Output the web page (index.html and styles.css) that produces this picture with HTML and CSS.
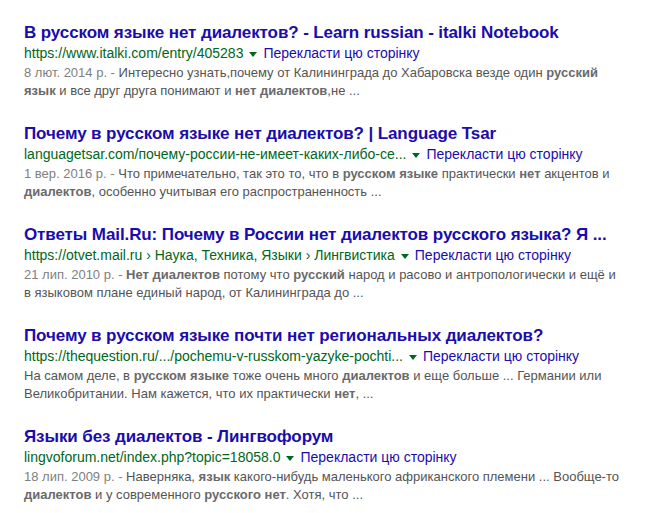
FILE: index.html
```html
<!DOCTYPE html>
<html lang="ru">
<head>
<meta charset="utf-8">
<link rel="stylesheet" href="styles.css">
</head>
<body>
<div class="results">
  <div class="g">
    <h3 class="t"><a href="#">В русском языке нет диалектов? - Learn russian - italki Notebook</a></h3>
    <div class="u"><cite>https://www.italki.com/entry/405283</cite><span class="arr"></span><a class="tr" href="#">Перекласти цю сторінку</a></div>
    <div class="s"><span class="d">8 лют. 2014 р. - </span>Интересно узнать,почему от Калининграда до Хабаровска везде один <b>русский</b><br><b>язык</b> и все друг друга понимают и <b>нет диалектов</b>,не ...</div>
  </div>
  <div class="g">
    <h3 class="t"><a href="#">Почему в русском языке нет диалектов? | Language Tsar</a></h3>
    <div class="u"><cite>languagetsar.com/почему-россии-не-имеет-каких-либо-се...</cite><span class="arr"></span><a class="tr" href="#">Перекласти цю сторінку</a></div>
    <div class="s"><span class="d">1 вер. 2016 р. - </span>Что примечательно, так это то, что в <b>русском языке</b> практически <b>нет</b> акцентов и<br><b>диалектов</b>, особенно учитывая его распространенность ...</div>
  </div>
  <div class="g">
    <h3 class="t"><a href="#">Ответы Mail.Ru: Почему в России нет диалектов русского языка? Я ...</a></h3>
    <div class="u"><cite>https://otvet.mail.ru › Наука, Техника, Языки › Лингвистика</cite><span class="arr"></span><a class="tr" href="#">Перекласти цю сторінку</a></div>
    <div class="s"><span class="d">21 лип. 2010 р. - </span><b>Нет диалектов</b> потому что <b>русский</b> народ и расово и антропологически и ещё и<br>в языковом плане единый народ, от Калининграда до ...</div>
  </div>
  <div class="g">
    <h3 class="t"><a href="#">Почему в русском языке почти нет региональных диалектов?</a></h3>
    <div class="u"><cite>https://thequestion.ru/.../pochemu-v-russkom-yazyke-pochti...</cite><span class="arr"></span><a class="tr" href="#">Перекласти цю сторінку</a></div>
    <div class="s">На самом деле, в <b>русском языке</b> тоже очень много <b>диалектов</b> и еще больше ... Германии или<br>Великобритании. Нам кажется, что их практически <b>нет</b>, ...</div>
  </div>
  <div class="g">
    <h3 class="t"><a href="#">Языки без диалектов - Лингвофорум</a></h3>
    <div class="u"><cite>lingvoforum.net/index.php?topic=18058.0</cite><span class="arr"></span><a class="tr" href="#">Перекласти цю сторінку</a></div>
    <div class="s"><span class="d">18 лип. 2009 р. - </span>Наверняка, <b>язык</b> какого-нибудь маленького африканского племени ... Вообще-то<br><b>диалектов</b> и у современного <b>русского нет</b>. Хотя, что ...</div>
  </div>
</div>
</body>
</html>
```

FILE: styles.css
```css
html, body {
  margin: 0;
  padding: 0;
  background: #fff;
}
body {
  font-family: "Liberation Sans", Arial, sans-serif;
}
.results {
  display: flex;
  flex-direction: column;
  gap: 23px;
  padding: 22px 0 0 24px;
}
.g {
  display: flex;
  flex-direction: column;
}
.t {
  margin: 0;
  font-size: 17px;
  font-weight: bold;
  letter-spacing: -0.1px;
  line-height: 22px;
  white-space: nowrap;
}
.t a {
  color: #1a0dab;
  text-decoration: none;
}
.u {
  display: flex;
  align-items: center;
  height: 18px;
  font-size: 14px;
  line-height: 18px;
  white-space: nowrap;
  margin-bottom: 2px;
}
cite {
  font-style: normal;
  color: #006621;
}
.arr {
  width: 0;
  height: 0;
  border-left: 4px solid transparent;
  border-right: 4px solid transparent;
  border-top: 5px solid #006621;
  margin: 2px 6px 0 6px;
}
.tr {
  color: #1a0dab;
  text-decoration: none;
}
.s {
  font-size: 13px;
  line-height: 18px;
  color: #545454;
  white-space: nowrap;
}
.s b {
  color: #6a6a6a;
}
.d {
  color: #808080;
}
```
